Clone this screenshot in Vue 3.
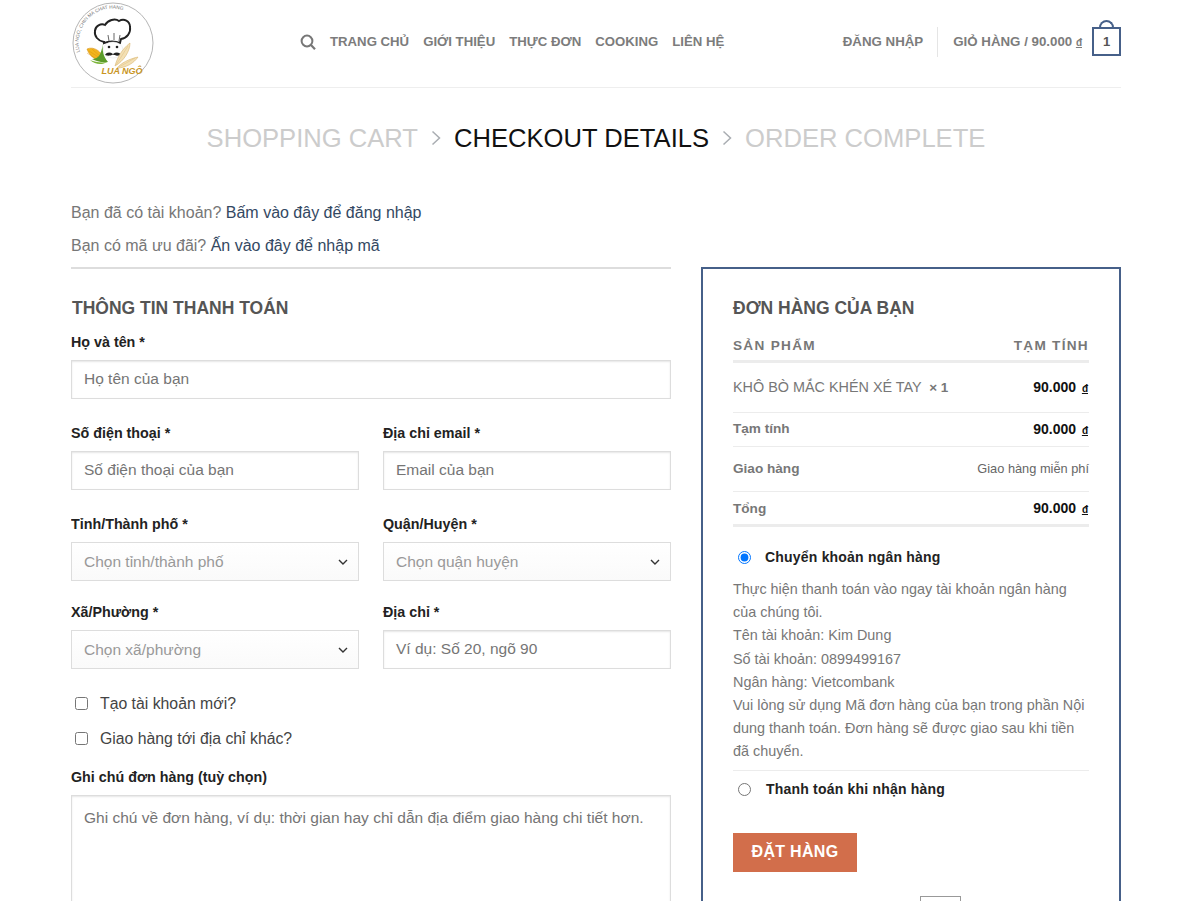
<template>
  <div class="page">
    <header class="site-header">
      <a class="logo">
        <svg width="82" height="82" viewBox="0 0 82 82">
          <circle cx="41" cy="41" r="40" fill="#fff" stroke="#b5b5b5" stroke-width="1" />
          <path id="logoArc" d="M8 50A34 34 0 0 1 52 8.500" fill="none" />
          <text class="logo-arc"><textPath href="#logoArc">LUA NGO, CHIN MA CHAT HANG</textPath></text>
          <path d="M32 40c-6-1-10-6-9-11 0-5 6-8 10-6 3-5 10-7 14-4 5-3 11 0 11 6 1 6-3 11-9 12l-1 4c-5-2-11-2-16 0z" fill="#fff" stroke="#222" stroke-width="1.900" />
          <path d="M36 33l1 6M42 31v7M48 33l-1 6" stroke="#555" stroke-width=".9" fill="none" />
          <ellipse cx="41" cy="48" rx="10" ry="8" fill="#fff" stroke="#e3e3e3" stroke-width=".5" />
          <circle cx="37" cy="45" r="1.300" fill="#222" />
          <circle cx="45" cy="45" r="1.300" fill="#222" />
          <path d="M33 53c2-3 5-3 8-1 3-2 6-2 8 1-3 1-6 1-8-.5-3 1.500-5 1.500-8 .5z" fill="#222" />
          <path d="M15 47c7-3 14 2 19 12-7 1-16-3-19-12z" fill="#f2b51d" stroke="#d68e10" stroke-width=".6" />
          <path d="M17 49l14 9M20 47l10 9M15 51l11 7" stroke="#d68e10" stroke-width=".4" fill="none" />
          <path d="M31 41c-1 7 0 13 5 19-6 1-12-1-16-3 6 0 9-3 11-16z" fill="#5b9c2a" />
          <path d="M18 58c5 2 11 3 17 2-4 3-12 3-17-2z" fill="#7cb53a" />
          <path d="M43 64c2-8 7-17 15-23 0 8-6 18-15 23zM45 66c4-5 12-9 21-11-4 6-12 11-21 11z" fill="#f3e0b5" stroke="#d9b570" stroke-width=".6" />
          <path d="M44 63l12-19M47 65l16-9" stroke="#d9b570" stroke-width=".4" fill="none" />
          <text class="logo-name" x="50" y="72" text-anchor="middle">LUA NGÔ</text>
        </svg>
      </a>
      <nav class="main-nav">
        <svg class="search-icon" width="16" height="16" viewBox="0 0 16 16">
          <circle cx="7" cy="7" r="5.400" fill="none" stroke="#777" stroke-width="2" />
          <path d="M11 11l4 4.200" stroke="#777" stroke-width="2.200" fill="none" />
        </svg>
        <a v-for="item in navItems" :key="item">{{ item }}</a>
      </nav>
      <div class="account">
        <a class="login">ĐĂNG NHẬP</a>
        <span class="divider"></span>
        <a class="cart-link">GIỎ HÀNG / 90.000 <u class="cur">đ</u></a>
        <span class="cart-box">1</span>
      </div>
    </header>

    <div class="steps">
      <span class="step">SHOPPING CART</span>
      <svg class="chev" width="10" height="16" viewBox="0 0 10 16"><path d="M1.500 1.500L8.500 8L1.500 14.500" fill="none" stroke="#a9adb2" stroke-width="1.500" /></svg>
      <span class="step current">CHECKOUT DETAILS</span>
      <svg class="chev" width="10" height="16" viewBox="0 0 10 16"><path d="M1.500 1.500L8.500 8L1.500 14.500" fill="none" stroke="#a9adb2" stroke-width="1.500" /></svg>
      <span class="step">ORDER COMPLETE</span>
    </div>

    <div class="notices">
      <p>Bạn đã có tài khoản? <a>Bấm vào đây để đăng nhập</a></p>
      <p>Bạn có mã ưu đãi? <a>Ấn vào đây để nhập mã</a></p>
    </div>

    <div class="checkout">
      <section class="billing">
        <h3>THÔNG TIN THANH TOÁN</h3>
        <div class="form-grid">
          <div class="field wide">
            <label>Họ và tên *</label>
            <div class="control">Họ tên của bạn</div>
          </div>
          <div class="field">
            <label>Số điện thoại *</label>
            <div class="control">Số điện thoại của bạn</div>
          </div>
          <div class="field">
            <label>Địa chỉ email *</label>
            <div class="control">Email của bạn</div>
          </div>
          <div class="field">
            <label>Tỉnh/Thành phố *</label>
            <div class="control select">Chọn tỉnh/thành phố<svg width="10" height="6" viewBox="0 0 10 6"><path d="M1 1l4 4 4-4" fill="none" stroke="#333" stroke-width="1.400" /></svg></div>
          </div>
          <div class="field">
            <label>Quận/Huyện *</label>
            <div class="control select">Chọn quận huyện<svg width="10" height="6" viewBox="0 0 10 6"><path d="M1 1l4 4 4-4" fill="none" stroke="#333" stroke-width="1.400" /></svg></div>
          </div>
          <div class="field tight">
            <label>Xã/Phường *</label>
            <div class="control select">Chọn xã/phường<svg width="10" height="6" viewBox="0 0 10 6"><path d="M1 1l4 4 4-4" fill="none" stroke="#333" stroke-width="1.400" /></svg></div>
          </div>
          <div class="field tight">
            <label>Địa chỉ *</label>
            <div class="control">Ví dụ: Số 20, ngõ 90</div>
          </div>
        </div>
        <div class="checks">
          <div class="check"><input type="checkbox" />Tạo tài khoản mới?</div>
          <div class="check"><input type="checkbox" />Giao hàng tới địa chỉ khác?</div>
        </div>
        <label class="note-label">Ghi chú đơn hàng (tuỳ chọn)</label>
        <div class="control textarea">Ghi chú về đơn hàng, ví dụ: thời gian hay chỉ dẫn địa điểm giao hàng chi tiết hơn.</div>
      </section>

      <aside class="order">
        <h3>ĐƠN HÀNG CỦA BẠN</h3>
        <div class="order-head"><span>SẢN PHẨM</span><span>TẠM TÍNH</span></div>
        <div class="order-row item">
          <span class="product">KHÔ BÒ MẮC KHÉN XÉ TAY <b>&nbsp;× 1</b></span>
          <span class="price">90.000 <u>đ</u></span>
        </div>
        <div class="order-row sub">
          <span class="key">Tạm tính</span>
          <span class="price">90.000 <u>đ</u></span>
        </div>
        <div class="order-row ship">
          <span class="key">Giao hàng</span>
          <span class="free">Giao hàng miễn phí</span>
        </div>
        <div class="order-row total">
          <span class="key">Tổng</span>
          <span class="price">90.000 <u>đ</u></span>
        </div>

        <div class="pay-option first">
          <input type="radio" name="pay" checked />
          <b>Chuyển khoản ngân hàng</b>
        </div>
        <div class="pay-desc">
          <p v-for="line in bankLines" :key="line">{{ line }}</p>
        </div>
        <div class="pay-option second">
          <input type="radio" name="pay" />
          <b>Thanh toán khi nhận hàng</b>
        </div>
        <button class="place-order">ĐẶT HÀNG</button>
        <div class="stub"></div>
      </aside>
    </div>
  </div>
</template>

<script setup>
const navItems = ['TRANG CHỦ', 'GIỚI THIỆU', 'THỰC ĐƠN', 'COOKING', 'LIÊN HỆ']

const bankLines = [
  'Thực hiện thanh toán vào ngay tài khoản ngân hàng của chúng tôi.',
  'Tên tài khoản: Kim Dung',
  'Số tài khoản: 0899499167',
  'Ngân hàng: Vietcombank',
  'Vui lòng sử dụng Mã đơn hàng của bạn trong phần Nội dung thanh toán. Đơn hàng sẽ được giao sau khi tiền đã chuyển.'
]
</script>

<style>
html, body {
  margin: 0;
  height: 901px;
  overflow: hidden;
  background: #fff;
}
</style>

<style scoped>
.page {
  width: 1050px;
  height: 901px;
  overflow: hidden;
  margin-left: 71px;
  font-family: "Liberation Sans", Arial, sans-serif;
  color: #777;
}

p, h3 {
  margin: 0;
}

.site-header {
  display: flex;
  align-items: center;
  height: 87px;
  border-bottom: 1px solid #eee;
}

.logo {
  width: 82px;
  height: 82px;
  margin-top: -2px;
  margin-left: 1px;
}

.logo-arc {
  font-size: 4.800px;
  fill: #777;
}

.logo-name {
  font-size: 9px;
  font-weight: 700;
  font-style: italic;
  fill: #c9951f;
}

.main-nav {
  display: flex;
  align-items: center;
  gap: 14px;
  margin-left: 146px;
  margin-top: -4px;
  font-size: 13.200px;
  font-weight: 700;
  color: #7c7c7c;
}

.account {
  display: flex;
  align-items: center;
  margin-left: auto;
  margin-top: -4px;
  font-size: 13.300px;
  font-weight: 700;
  color: #7c7c7c;
}

.divider {
  width: 1px;
  height: 30px;
  background: #e5e5e5;
  margin: 0 15px 0 14px;
}

.cur {
  font-size: 10px;
}

.cart-box {
  position: relative;
  width: 25px;
  height: 25px;
  margin-left: 10px;
  border: 2px solid #466089;
  text-align: center;
  line-height: 25px;
  font-size: 13px;
  font-weight: 700;
  color: #555;
}

.cart-box::before {
  content: "";
  position: absolute;
  left: 5px;
  top: -9px;
  width: 11px;
  height: 7px;
  border: 2px solid #466089;
  border-bottom: 0;
  border-radius: 8px 8px 0 0;
}

.steps {
  display: flex;
  justify-content: center;
  align-items: center;
  gap: 13px;
  margin-top: 33px;
  height: 34px;
  font-size: 25.600px;
  color: #ccc;
}

.step.current {
  color: #111;
}

.notices {
  margin-top: 41px;
  font-size: 16px;
  line-height: 33px;
  color: #777;
}

.notices p {
  height: 33px;
}

.notices a {
  color: #334862;
}

.checkout {
  display: flex;
  gap: 30px;
  margin-top: 5px;
}

.billing {
  width: 600px;
  border-top: 2px solid #ddd;
  padding-top: 28px;
}

.billing h3, .order h3 {
  font-size: 17.500px;
  line-height: 22px;
  font-weight: 700;
  color: #555;
}

.billing h3 {
  margin-left: 1px;
}

.form-grid {
  display: grid;
  grid-template-columns: 288px 288px;
  column-gap: 24px;
  row-gap: 25px;
  margin-top: 14px;
}

.field.wide {
  grid-column: 1 / 3;
}

.field.tight {
  margin-top: -3px;
}

label {
  display: block;
  height: 27px;
  line-height: 18px;
  font-size: 14.300px;
  font-weight: 700;
  color: #222;
}

.control {
  box-sizing: border-box;
  height: 39px;
  padding: 0 12px;
  border: 1px solid #ddd;
  box-shadow: inset 0 1px 2px rgba(0, 0, 0, 0.1);
  font-size: 15.500px;
  line-height: 36px;
  color: #757575;
}

.control.select {
  display: flex;
  align-items: center;
  justify-content: space-between;
  padding-right: 10px;
  color: #999;
  background: linear-gradient(#fff, #fafafa);
  box-shadow: none;
}

.control.textarea {
  height: 140px;
  padding-top: 4px;
}

.checks {
  margin-top: 17px;
}

.check {
  display: flex;
  align-items: center;
  height: 35px;
  font-size: 15.800px;
  color: #444;
}

.check input {
  width: 13px;
  height: 13px;
  margin: 0 12px 0 4px;
}

.note-label {
  margin-top: 12px;
}

.order {
  box-sizing: border-box;
  width: 420px;
  height: 700px;
  padding: 28px 30px 0;
  border: 2px solid #466089;
}

.order-head {
  display: flex;
  justify-content: space-between;
  height: 24px;
  margin-top: 17px;
  line-height: 19px;
  border-bottom: 3px solid #ececec;
  font-size: 13.600px;
  font-weight: 700;
  letter-spacing: 1.300px;
  color: #777;
}

.order-row {
  display: flex;
  justify-content: space-between;
  align-items: center;
  border-bottom: 1px solid #ececec;
  font-size: 14px;
}

.order-row.item {
  height: 47px;
  padding-bottom: 2px;
}

.order-row.sub {
  height: 31px;
  padding-bottom: 2px;
}

.order-row.ship {
  height: 42px;
  padding-bottom: 2px;
}

.order-row.total {
  height: 32px;
  border-bottom: 3px solid #ececec;
}

.product {
  font-size: 14.400px;
}

.product b {
  font-size: 13.500px;
}

.key {
  font-size: 13.600px;
  font-weight: 700;
}

.price {
  font-weight: 700;
  color: #111;
}

.price u {
  margin: 0 1px 0 2px;
  font-size: 10px;
}

.free {
  font-size: 12.800px;
  color: #666;
}

.pay-option {
  display: flex;
  align-items: center;
  font-size: 14px;
  color: #222;
  letter-spacing: 0.200px;
}

.pay-option input {
  width: 13px;
  height: 13px;
  margin: 0 14px 0 5px;
}

.pay-option.first {
  margin-top: 20px;
  height: 20px;
}

.pay-option.second {
  height: 37px;
}

.pay-option.second b {
  margin-left: 1px;
}

.pay-desc {
  margin-top: 11px;
  padding-bottom: 6px;
  border-bottom: 1px solid #ececec;
  font-size: 14.400px;
  line-height: 23.200px;
  color: #777;
}

.place-order {
  display: block;
  width: 124px;
  height: 39px;
  margin-top: 25px;
  padding: 0;
  border: 0;
  background: #d26e4b;
  color: #fff;
  font-family: inherit;
  font-size: 16px;
  font-weight: 700;
  letter-spacing: 0.300px;
}

.stub {
  width: 39px;
  height: 30px;
  margin: 24px 0 0 187px;
  border: 1px solid #999;
}
</style>
